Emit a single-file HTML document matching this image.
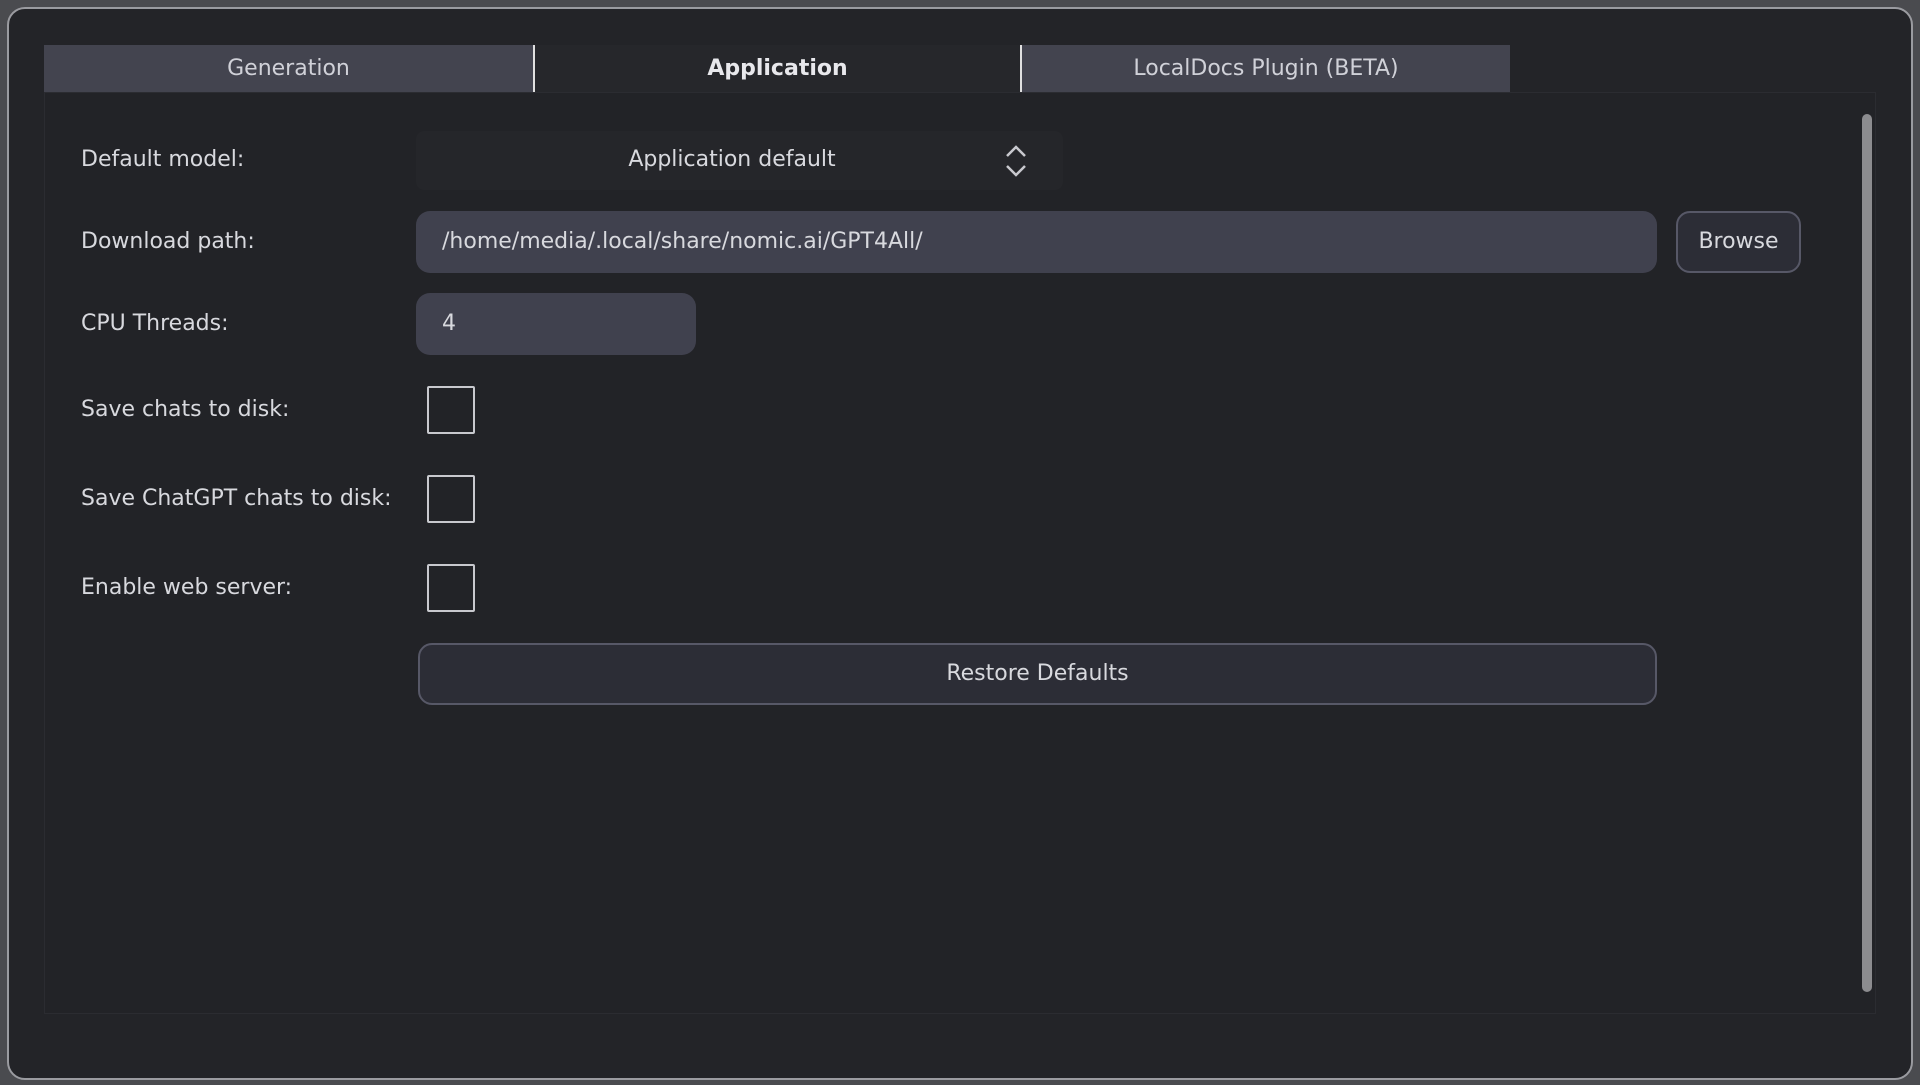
<!DOCTYPE html>
<html><head><meta charset="utf-8"><style>
*{margin:0;padding:0;box-sizing:border-box}
body{width:1920px;height:1085px;background:#4a4b4f;position:relative;overflow:hidden;font-family:"DejaVu Sans","Liberation Sans",sans-serif;font-size:22px;color:#d8d9de}
.win{position:absolute;left:7px;top:7px;width:1906px;height:1073px;background:#232428;border:2px solid #9a9ba0;border-radius:18px}
.abs{position:absolute}
.tab{position:absolute;top:45px;height:47px;background:#43444f;text-align:center;line-height:47px;color:#d0d1d8}
.panel{position:absolute;left:44px;top:92px;width:1832px;height:922px;border:1px solid #2b2c31;background:#222327}
.lab{position:absolute;left:81px;line-height:26px}
.field{position:absolute;background:#40414e;border-radius:14px}
.btn{position:absolute;background:#2c2d36;border:2px solid #575867;border-radius:14px;text-align:center;color:#d8d9de}
.cb{position:absolute;left:427px;width:48px;height:48px;border:2px solid #c8c9ce;border-radius:2px}
</style></head><body>
<div class="win"></div>
<div class="panel"></div>
<div class="tab" style="left:44px;width:489px">Generation</div>
<div class="tab" style="left:533px;width:487px;background:#26272b;font-weight:bold;color:#e8e8ec;border-left:2px solid #e0e0e0">Application</div>
<div class="tab" style="left:1020px;width:490px;border-left:2px solid #e0e0e0">LocalDocs Plugin (BETA)</div>
<div class="abs" style="left:1862px;top:114px;width:10px;height:878px;background:#8c8c8f;border-radius:5px"></div>

<div class="lab" style="top:147px">Default model:</div>
<div class="abs" style="left:416px;top:131px;width:647px;height:59px;background:#25262a;border-radius:8px"></div>
<div class="abs" style="left:416px;top:147px;width:632px;text-align:center;line-height:26px">Application default</div>
<svg class="abs" style="left:1003px;top:142px" width="26" height="38" viewBox="0 0 26 38"><path d="M4 14 L13 5 L22 14 M4 24 L13 33 L22 24" fill="none" stroke="#c8c9ce" stroke-width="2.5"/></svg>

<div class="lab" style="top:229px">Download path:</div>
<div class="field" style="left:416px;top:211px;width:1241px;height:62px"></div>
<div class="abs" style="left:442px;top:229px;line-height:26px">/home/media/.local/share/nomic.ai/GPT4All/</div>
<div class="btn" style="left:1676px;top:211px;width:125px;height:62px;line-height:58px">Browse</div>

<div class="lab" style="top:311px">CPU Threads:</div>
<div class="field" style="left:416px;top:293px;width:280px;height:62px"></div>
<div class="abs" style="left:442px;top:311px;line-height:26px">4</div>

<div class="lab" style="top:397px">Save chats to disk:</div>
<div class="cb" style="top:386px"></div>
<div class="lab" style="top:486px">Save ChatGPT chats to disk:</div>
<div class="cb" style="top:475px"></div>
<div class="lab" style="top:575px">Enable web server:</div>
<div class="cb" style="top:564px"></div>

<div class="btn" style="left:418px;top:643px;width:1239px;height:62px;line-height:58px">Restore Defaults</div>
</body></html>
